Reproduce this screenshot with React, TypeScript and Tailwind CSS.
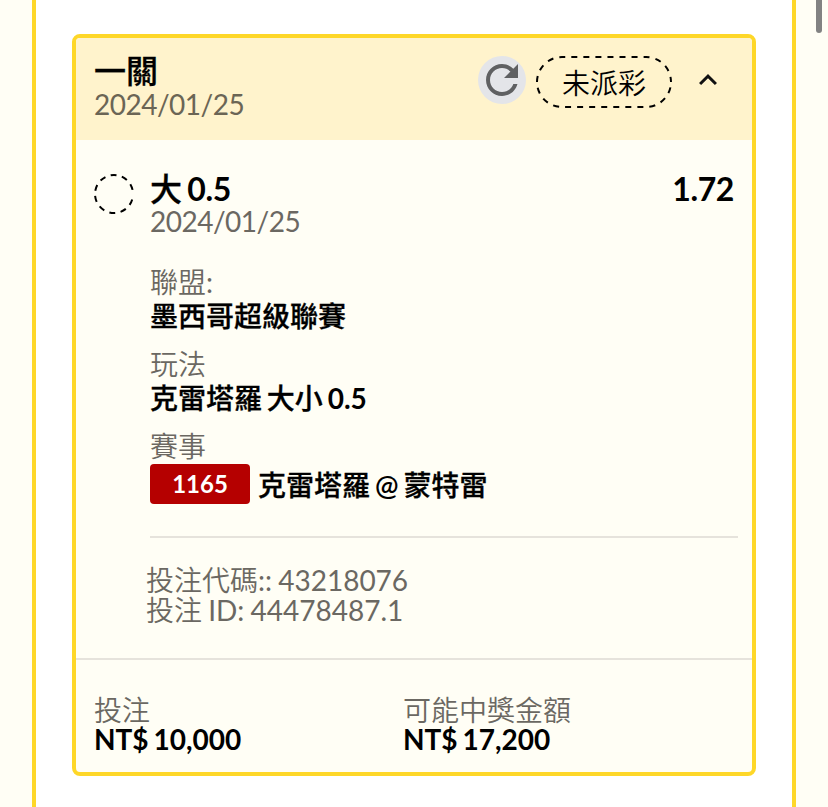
import { ReactNode } from "react";

const slip = {
    title: "一關",
    date: "2024/01/25",
    status: "未派彩",
    pick: "大 0.5",
    odds: "1.72",
    code: "43218076",
    id: "44478487.1",
};

const totals = [
    { label: "投注", value: "NT$ 10,000" },
    { label: "可能中獎金額", value: "NT$ 17,200" },
];

// Chinese runs take a lighter cut than the Latin text beside them
function Han({ text, bold = false }: { text: string; bold?: boolean }) {
    return text.split(/([\u4e00-\u9fff]+)/).map((part, i) =>
        i % 2 ? (
            <span key={i} className={bold ? "font-medium [-webkit-text-stroke:0.3px]" : "font-[350]"}>
                {part}
            </span>
        ) : (
            part
        ),
    );
}

function RefreshButton() {
    return (
        <button className="size-12 rounded-full bg-[#e4e5e9]">
            <svg viewBox="0 0 24 24" className="size-12" fill="#5f6062">
                <path d="M17.65 6.35C16.2 4.9 14.21 4 12 4c-4.42 0-7.99 3.58-7.99 8s3.57 8 7.99 8c3.73 0 6.84-2.55 7.73-6h-2.08c-.82 2.33-3.04 4-5.65 4-3.31 0-6-2.69-6-6s2.69-6 6-6c1.66 0 3.14.69 4.22 1.78L13 11h7V4l-2.35 2.35z" />
            </svg>
        </button>
    );
}

function StatusPill({ children }: { children: ReactNode }) {
    return (
        <span className="relative ml-2.5 flex h-[52px] w-[136px] items-center justify-center pt-0.5">
            <svg viewBox="0 0 136 52" className="absolute inset-0 h-full w-full" fill="none" stroke="#000" strokeWidth="2">
                <path
                    d="M135 26 A25 25 0 0 1 110 51 H26 A25 25 0 0 1 26 1 H110 A25 25 0 0 1 135 26"
                    strokeDasharray="6 6.05"
                    strokeDashoffset="6.55"
                />
            </svg>
            {children}
        </span>
    );
}

function Field({ label, children }: { label: string; children: ReactNode }) {
    return (
        <div className="mb-[13px]">
            <p className="h-[33px] leading-[34px] text-[#6b6862]">
                <Han text={label} />
            </p>
            <div className="flex h-9 items-center font-bold">{children}</div>
        </div>
    );
}

function Header() {
    return (
        <header className="flex h-[102px] justify-between bg-[#fff3cc] pl-[18px] pr-[26px] pt-[18px]">
            <div>
                <h2 className="h-[31px] text-[32px] leading-[30px] font-bold">
                    <Han text={slip.title} bold />
                </h2>
                <p className="leading-[34px] tracking-[-0.5px] text-[#6b6555]">{slip.date}</p>
            </div>
            <div className="flex items-start">
                <RefreshButton />
                <StatusPill>
                    <Han text={slip.status} />
                </StatusPill>
                <svg viewBox="0 0 24 24" className="ml-[18px] mt-1.5 size-9" fill="#111">
                    <path d="M12 8l-6 6 1.41 1.41L12 10.83l4.59 4.58L18 14z" />
                </svg>
            </div>
        </header>
    );
}

function Selection() {
    return (
        <section className="flex h-[518px] pl-[18px] pr-3.5 pt-[33px]">
            <svg viewBox="0 0 40 40" className="mt-px size-10 shrink-0" fill="none" stroke="#000" strokeWidth="2">
                <circle cx="20" cy="20" r="19" strokeDasharray="6 5.43" strokeDashoffset="5.9" />
            </svg>
            <div className="ml-4 flex-1">
                <div className="flex h-8 justify-between pr-1 text-[32px] leading-[31px] font-bold">
                    <span className="tracking-[-0.3px]">
                        <Han text={slip.pick} bold />
                    </span>
                    <span className="tracking-[-0.4px]">{slip.odds}</span>
                </div>
                <p className="mb-7 h-8 leading-[33px] tracking-[-0.5px] text-[#6b6862]">{slip.date}</p>
                <Field label="聯盟:">
                    <p>
                        <Han text="墨西哥超級聯賽" bold />
                    </p>
                </Field>
                <Field label="玩法">
                    <p>
                        <Han text="克雷塔羅 大小 0.5" bold />
                    </p>
                </Field>
                <Field label="賽事">
                    <span className="mr-2 mt-2 flex h-10 w-[100px] shrink-0 items-center justify-center rounded bg-[#b50000] text-2xl text-white">
                        1165
                    </span>
                    <p className="mt-2.5">
                        <Han text="克雷塔羅" bold />
                        <span className="font-semibold"> @ </span>
                        <Han text="蒙特雷" bold />
                    </p>
                </Field>
                <div className="mt-[38px] border-t-2 border-[#e6e3dc] pt-[27px]">
                    <p className="-ml-1 leading-[30px] [word-spacing:-1px] text-[#6b6862]">
                        <Han text={`投注代碼:: ${slip.code}`} />
                    </p>
                    <p className="-ml-1 leading-[30px] [word-spacing:-1px] text-[#6b6862]">
                        <Han text={`投注 ID: ${slip.id}`} />
                    </p>
                </div>
            </div>
        </section>
    );
}

export default function App() {
    return (
        <div className="relative flex h-[807px] justify-center overflow-hidden bg-[#fffef5] font-['Lato','Noto_Sans_CJK_TC',sans-serif] text-[28px] [word-spacing:-2px] text-black">
            <main className="w-[764px] border-x-4 border-[#fed728] bg-white px-9 pt-[34px]">
                <article className="h-[742px] overflow-hidden rounded-lg border-4 border-[#fed728] bg-[#fffef5]">
                    <Header />
                    <Selection />
                    <footer className="grid h-[114px] grid-cols-[309px_1fr] border-t-2 border-[#e6e3dc] pl-[18px] pt-[35px]">
                        {totals.map((item) => (
                            <div key={item.label}>
                                <p className="h-[30px] leading-[30px] text-[#6b6862]">
                                    <Han text={item.label} />
                                </p>
                                <p className="h-[30px] leading-[29px] font-bold">{item.value}</p>
                            </div>
                        ))}
                    </footer>
                </article>
            </main>
            <div className="absolute right-1.5 top-0 h-[33px] w-1.5 rounded-b-full bg-[#828282]" />
        </div>
    );
}
